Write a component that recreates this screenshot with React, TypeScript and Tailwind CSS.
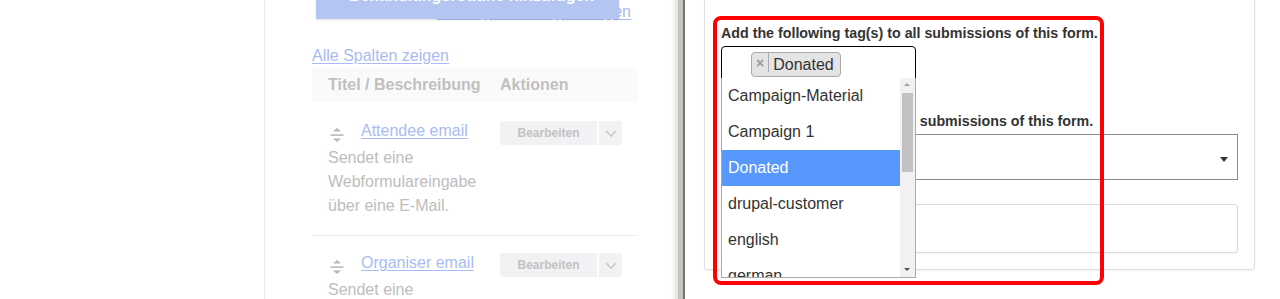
import React from "react";

const LINK = "text-[#a9bbf2] underline decoration-[#a9bbf2] underline-offset-[2px]";
const GRAY = "text-[#bdbdbd]";

function Handle() {
  return (
    <svg width="14" height="14" viewBox="0 0 14 14" className="mt-[9px] shrink-0">
      <polygon points="3,3.5 11,3.5 7,0" fill="#b8b8b8" />
      <rect x="0.5" y="6.3" width="13" height="1.6" fill="#b8b8b8" />
      <polygon points="3,10.5 11,10.5 7,14" fill="#b8b8b8" />
    </svg>
  );
}

function EditButton() {
  return (
    <div className="mt-[2px] flex h-[24px] gap-[2px]">
      <div className="flex w-[97px] items-center justify-center rounded-l-[3px] bg-[#f2f2f4] text-[12px] font-bold text-[#c2c2c2]">
        Bearbeiten
      </div>
      <div className="flex w-[23px] items-center justify-center rounded-r-[3px] bg-[#f2f2f4]">
        <svg width="12" height="7" viewBox="0 0 12 7">
          <polyline points="1,1 6,6 11,1" fill="none" stroke="#c8c8c8" strokeWidth="1.6" />
        </svg>
      </div>
    </div>
  );
}

function Row({ title, pt, border }: { title: string; pt: string; border: boolean }) {
  return (
    <div className={`flex ${pt} pb-[17px] ${border ? "border-b border-[#eeeeee]" : ""}`}>
      <div className="w-[188px] shrink-0 pl-[16px] pr-[12px]">
        <div className="flex h-[24px] items-start">
          <div className="ml-[2px]">
            <Handle />
          </div>
          <a className={`ml-[17px] leading-[24px] ${LINK}`}>{title}</a>
        </div>
        <div className={`mt-[3px] leading-[24px] ${GRAY}`}>
          Sendet eine Webformulareingabe über eine E-Mail.
        </div>
      </div>
      <div>
        <EditButton />
      </div>
    </div>
  );
}

const options = ["Campaign-Material", "Campaign 1", "Donated", "drupal-customer", "english", "german"];

export default function App() {
  return (
    <div className="flex h-[299px] w-[1280px] overflow-hidden bg-white font-['Liberation_Sans',Arial,sans-serif] text-[16px]">
      <div className="w-[265px] shrink-0 border-r border-[#ebebeb] bg-white" />

      <div className="relative w-[410px] shrink-0 pl-[47px] pr-[37px]">
        <div className="flex justify-end pr-[7px] leading-[24px]">
          <a className={LINK}>Zeilengewichtungen zeigen</a>
        </div>
        <div className="mt-[20px] leading-[24px]">
          <a className={LINK}>Alle Spalten zeigen</a>
        </div>
        <div className="flex h-[34px] items-center bg-[#fafafa] font-bold text-[#c0c0c0]">
          <div className="w-[188px] shrink-0 pl-[16px]">Titel / Beschreibung</div>
          <div>Aktionen</div>
        </div>
        <Row title="Attendee email" pt="pt-[17px]" border />
        <Row title="Organiser email" pt="pt-[15px]" border={false} />

        <div className="absolute left-[51px] top-[-24px] z-10 flex h-[43px] w-[303px] justify-center bg-[#b3c5f0] pt-[8px] pl-[8px] text-[16px] font-bold leading-[24px] text-white shadow-[0_1px_2px_rgba(0,0,0,0.12)]">
          Behandlungsroutine hinzufügen
        </div>
        <div className="absolute right-0 top-0 bottom-0 w-[4px] bg-gradient-to-r from-white to-[#f0f0f0]" />
      </div>

      <div className="flex shrink-0">
        <div className="w-[3px] bg-[#e6e6e6]" />
        <div className="w-[5px] bg-[#c4c4bd]" />
        <div className="w-[2px] bg-[#737373]" />
      </div>

      <div className="relative flex-1">
        <div className="ml-[19px] mt-[-10px] w-[551px] rounded-[3px] border border-[#dedede] px-[16px] pt-[32px] pb-[16px] shadow-[0_1px_2px_rgba(0,0,0,0.06)]">
          <div className="text-[14.25px] font-bold leading-[20px] text-[#333333]">
            Add the following tag(s) to all submissions of this form.
          </div>
          <div className="mt-[3px] h-[40px] w-[195px] rounded-t-[4px] border border-black pl-[29px] pt-[5px]">
            <div className="flex h-[25px] w-[90px] items-stretch rounded-[4px] border border-[#aaaaaa] bg-[#e4e4e4]">
              <div className="flex h-[19px] items-center border-r border-[#aaaaaa] px-[4px] text-[14px] font-bold leading-none text-[#999999]">
                ×
              </div>
              <div className="flex items-center pl-[4px] text-[16px] leading-none text-[#333333]">Donated</div>
            </div>
          </div>
          <div className="mt-[25px] text-[14.25px] font-bold leading-[20px] text-[#333333]">
            Remove these tag(s) from all submissions of this form.
          </div>
          <div className="relative mt-[3px] h-[46px] border border-[#8a8a8a] bg-white">
            <div className="absolute right-[9px] top-[22px] h-0 w-0 border-x-[4px] border-t-[5px] border-x-transparent border-t-[#333333]" />
          </div>
          <div className="mt-[24px] h-[49px] rounded-[3px] border border-[#dddddd] bg-white shadow-[0_1px_2px_rgba(0,0,0,0.05)]" />
        </div>

        <div className="absolute left-[36px] top-[78px] z-10 flex h-[200px] w-[195px] border-x border-b border-[#aaaaaa] bg-white">
          <div className="flex-1 overflow-hidden">
            {options.map((o) => (
              <div
                key={o}
                className={`flex h-[36px] items-center pl-[6px] text-[16px] ${
                  o === "Donated" ? "bg-[#5897fb] text-white" : "text-[#333333]"
                }`}
              >
                {o}
              </div>
            ))}
          </div>
          <div className="relative w-[15px] shrink-0 bg-[#f1f1f1]">
            <div className="absolute left-[4px] top-[5px] h-0 w-0 border-x-[3.5px] border-b-[3px] border-x-transparent border-b-[#a3a3a3]" />
            <div className="absolute left-[2px] top-[15px] h-[79px] w-[11px] bg-[#c1c1c1]" />
            <div className="absolute left-[4px] bottom-[6px] h-0 w-0 border-x-[3.5px] border-t-[3px] border-x-transparent border-t-[#505050]" />
          </div>
        </div>

        <div className="pointer-events-none absolute left-[28px] top-[16px] z-20 h-[269px] w-[391px] rounded-[8px] border-[4px] border-[#ff0000]" />
      </div>
    </div>
  );
}
